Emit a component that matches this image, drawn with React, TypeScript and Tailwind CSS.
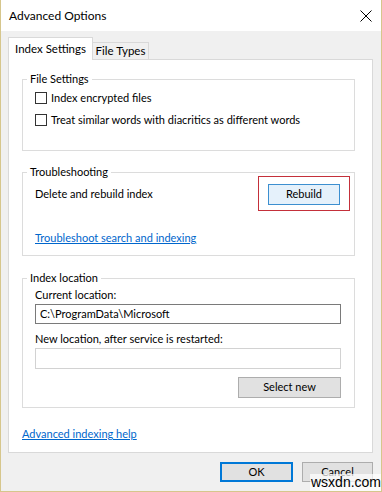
import React from "react";

const font = { fontFamily: 'Lato, "Noto Sans", sans-serif' };

function Checkbox({ label }: { label: string }) {
  return (
    <div className="flex items-center h-[16px] gap-[4px]">
      <div className="w-[12px] h-[12px] border border-[#333333] bg-white" />
      <span>{label}</span>
    </div>
  );
}

function Group({ title, children, className }: { title: string; children: React.ReactNode; className?: string }) {
  return (
    <fieldset className={"border border-[#dcdcdc] mx-[13px] mr-[17px] px-[12px] " + (className ?? "")}>
      <legend className="-ml-[8px] px-[3px] leading-[16px] h-[16px]">{title}</legend>
      {children}
    </fieldset>
  );
}

export default function App() {
  return (
    <div
      className="w-[382px] h-[492px] border-x border-b border-[#d6c68c] bg-[#f0f0f0] text-[11px] text-black relative overflow-hidden flex flex-col"
      style={font}
    >
      {/* Title bar */}
      <div className="h-[31px] bg-white flex items-center justify-between pl-[8px] pr-[8px] shrink-0">
        <span className="text-[12px]">Advanced Options</span>
        <svg width="12" height="12" viewBox="0 0 12 12" className="mr-[1px]">
          <path d="M0.5 0.5 L11.5 11.5 M11.5 0.5 L0.5 11.5" stroke="#000" strokeWidth="1" />
        </svg>
      </div>

      <div className="px-[7px] pt-[6px] flex flex-col">
        {/* Tabs */}
        <div className="flex items-end h-[22px]">
          <div className="bg-white border border-[#d9d9d9] border-b-0 w-[85px] justify-center flex items-center relative z-10 -mb-[1px] h-[23px] text-[11.5px]">
            Index Settings
          </div>
          <div className="h-[17px] bg-[#f0f0f0] border border-[#d9d9d9] border-l-0 border-b-0 w-[56px] justify-center flex items-center text-[11.5px]">
            File Types
          </div>
        </div>

        {/* Panel */}
        <div className="bg-white border border-[#d9d9d9] h-[394px] w-[365px] pt-[11px] flex flex-col">
          <Group title="File Settings" className="pb-[22px]">
            <div className="flex flex-col gap-[6px] pt-[3px]">
              <Checkbox label="Index encrypted files" />
              <Checkbox label="Treat similar words with diacritics as different words" />
            </div>
          </Group>

          <Group title="Troubleshooting" className="mt-[13px] pb-[9px]">
            <div className="flex items-center justify-between pr-[2px] pt-[4px]">
              <span>Delete and rebuild index</span>
              <div className="relative">
                <div className="absolute -left-[10px] -right-[10px] -top-[8px] -bottom-[6px] border border-[#c4303a]" />
                <button className="w-[72px] h-[21px] bg-[#e5f1fb] border border-[#3c8fd0] flex items-center justify-center">
                  Rebuild
                </button>
              </div>
            </div>
            <div className="mt-[25px] h-[16px] leading-[16px] text-[#0066cc] underline">
              Troubleshoot search and indexing
            </div>
          </Group>

          <Group title="Index location" className="mt-[14px] pb-[9px]">
            <div className="leading-[16px] mt-[1px]">Current location:</div>
            <div className="mt-[1px] h-[20px] w-[306px] border border-[#7a7a7a] flex items-center pl-[4px]">
              C:\ProgramData\Microsoft
            </div>
            <div className="leading-[16px] mt-[7px]">New location, after service is restarted:</div>
            <div className="mt-[1px] h-[21px] w-[306px] border border-[#d2d2d2] bg-white" />
            <div className="flex justify-end w-[306px] mt-[8px]">
              <button className="w-[103px] h-[21px] bg-[#e1e1e1] border border-[#adadad] flex items-center justify-center">
                Select new
              </button>
            </div>
          </Group>

          <div className="ml-[13px] mt-[18px] text-[#0066cc] underline leading-[16px]">
            Advanced indexing help
          </div>
        </div>

        {/* Bottom buttons */}
        <div className="flex justify-end gap-[9px] mt-[9px] pr-[1px]">
          <button className="w-[73px] h-[20px] bg-[#e1e1e1] border-2 border-[#0078d7] flex items-center justify-center">
            OK
          </button>
          <button className="w-[71px] h-[20px] bg-[#e1e1e1] border border-[#adadad] flex items-center justify-center">
            Cancel
          </button>
        </div>
      </div>

      <div className="absolute left-[309px] top-[474px] text-[14px] leading-[17px] bg-white/70 px-[1px]" style={{ fontFamily: '"Liberation Sans", sans-serif' }}>
        wsxdn.com
      </div>
    </div>
  );
}
